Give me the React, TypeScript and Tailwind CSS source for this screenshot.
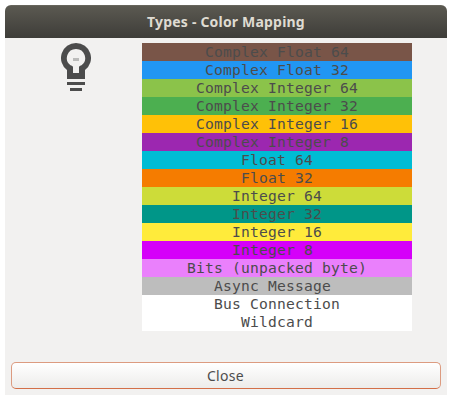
const rows = [
  { label: "Complex Float 64", color: "bg-[#795548]" },
  { label: "Complex Float 32", color: "bg-[#2196f3]" },
  { label: "Complex Integer 64", color: "bg-[#8bc34a]" },
  { label: "Complex Integer 32", color: "bg-[#4caf50]" },
  { label: "Complex Integer 16", color: "bg-[#ffc107]" },
  { label: "Complex Integer 8", color: "bg-[#9c27b0]" },
  { label: "Float 64", color: "bg-[#00bcd4]" },
  { label: "Float 32", color: "bg-[#f57c00]" },
  { label: "Integer 64", color: "bg-[#cddc39]" },
  { label: "Integer 32", color: "bg-[#009688]" },
  { label: "Integer 16", color: "bg-[#ffeb3b]" },
  { label: "Integer 8", color: "bg-[#d500f9]" },
  { label: "Bits (unpacked byte)", color: "bg-[#ea80fc]" },
  { label: "Async Message", color: "bg-[#bdbdbd]" },
  { label: "Bus Connection", color: "bg-white" },
  { label: "Wildcard", color: "bg-white" },
];

function Bulb() {
  return (
    <svg width="30" height="48" viewBox="0 0 30 48" fill="#4c4c4c" aria-hidden="true">
      <path
        fillRule="evenodd"
        d="M15 0a15 15 0 0 1 9 27v9H6v-9A15 15 0 0 1 15 0ZM15 6a9 9 0 0 0-5.500 16.200Q12 23 12 24v6h6v-6q0-1 2.500-1.800A9 9 0 0 0 15 6Z"
      />
      <path d="M6 39h18v3H6zM9 45h12v3H9z" />
      <path fill="#bbbbba" d="M12 15h6v3h-6z" />
    </svg>
  );
}

// Labels sit on a fixed character grid, so odd lengths get a trailing blank.
function padLabel(label: string) {
  return label.length % 2 ? label + "\u00a0" : label;
}

export default function App() {
  return (
    <div className="h-[404px] w-[456px] bg-white p-[5px]">
      <div className="flex h-[390px] w-[442px] flex-col overflow-hidden rounded-t-[6px] bg-[#f2f1f0]">
        <header className="flex h-[33px] shrink-0 items-center justify-center border-t border-[#67655c] bg-linear-to-b from-[#5b5951] to-[#3e3d39]">
          <h1 className="font-['Noto_Sans','Open_Sans',sans-serif] text-[14px] leading-[20px] font-bold tracking-[0.19px] whitespace-nowrap text-[#dfdbd2]">
            Types - Color Mapping
          </h1>
        </header>
        <main className="flex grow pt-[5px]">
          <div className="flex w-[137px] justify-center pl-[5px]">
            <Bulb />
          </div>
          <ul className="w-[270px] font-['DejaVu_Sans_Mono',monospace] text-[14.67px] tracking-[0.17px] text-[#4c4c4c]">
            {rows.map((row) => (
              <li key={row.label} className={`h-[18px] text-center leading-[18px] whitespace-nowrap ${row.color}`}>
                {padLabel(row.label)}
              </li>
            ))}
          </ul>
        </main>
        <footer className="px-[6px] pb-[6px]">
          <button className="flex h-[27px] w-full items-center justify-center rounded-[5px] border border-[#dc9b80] border-b-[#d36f48] bg-linear-to-b from-white to-[#edecea] pr-[1px] font-['Noto_Sans','Open_Sans',sans-serif] text-[14px] leading-[20px] tracking-[0.3px] text-[#4c4c4c]">
            Close
          </button>
        </footer>
      </div>
    </div>
  );
}
